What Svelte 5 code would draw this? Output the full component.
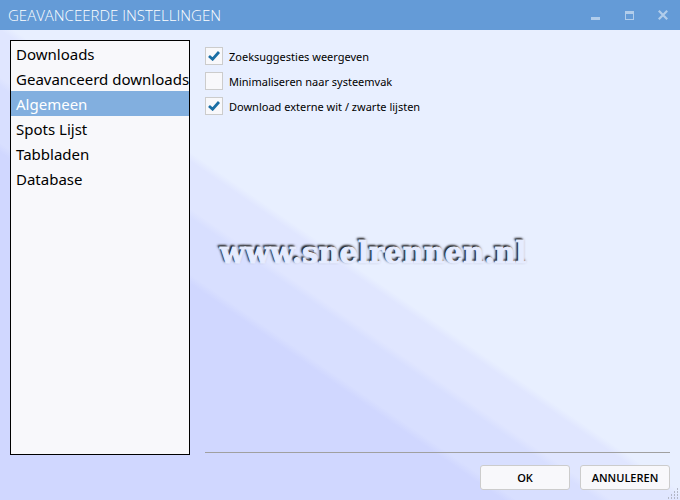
<script lang="ts">
	// Categories on the left hand side
	const categories: string[] = [
		'Downloads',
		'Geavanceerd downloads',
		'Algemeen',
		'Spots Lijst',
		'Tabbladen',
		'Database'
	];

	let selected = $state('Algemeen');

	let options = $state([
		{ label: 'Zoeksuggesties weergeven', checked: true },
		{ label: 'Minimaliseren naar systeemvak', checked: false },
		{ label: 'Download externe wit / zwarte lijsten', checked: true }
	]);

	// Dots of the resize grip, as [column, row]
	const grip = [
		[3, 0],
		[2, 1], [3, 1],
		[1, 2], [2, 2], [3, 2],
		[0, 3], [1, 3], [2, 3], [3, 3]
	];
</script>

<div class="window">
	<header class="titlebar">
		<h1>GEAVANCEERDE INSTELLINGEN</h1>
		<div class="window-buttons">
			<button type="button" aria-label="Minimaliseren">
				<svg width="10" height="10" viewBox="0 0 10 10" shape-rendering="crispEdges">
					<path d="M1 7h9v3H1z" fill="currentColor" />
				</svg>
			</button>
			<button type="button" aria-label="Maximaliseren">
				<svg width="10" height="10" viewBox="0 0 10 10" shape-rendering="crispEdges">
					<path d="M1 1h9v9H1zM2 4v5h7V4z" fill="currentColor" fill-rule="evenodd" />
				</svg>
			</button>
			<button type="button" aria-label="Sluiten">
				<svg width="10" height="10" viewBox="0 0 10 10">
					<path d="M0.8 0.8l8.4 8.4M9.2 0.8l-8.4 8.4" stroke="currentColor" stroke-width="2.2" />
				</svg>
			</button>
		</div>
	</header>

	<main class="client">
		<nav class="categories">
			{#each categories as category}
				<button type="button" class:active={category === selected} onclick={() => (selected = category)}>
					{category}
				</button>
			{/each}
		</nav>

		<section class="pane">
			<div class="options">
				{#each options as option}
					<label>
						<span class="box">
							<input type="checkbox" bind:checked={option.checked} />
							{#if option.checked}
								<svg width="12" height="10" viewBox="0 0 12 10">
									<path d="M1 5L4.6 8.2L11 1" fill="none" stroke="#1a6ea5" stroke-width="2.8" />
								</svg>
							{/if}
						</span>
						{option.label}
					</label>
				{/each}
			</div>

			<p class="watermark">www.snelrennen.nl</p>

			<footer>
				<button type="button">OK</button>
				<button type="button">ANNULEREN</button>
			</footer>
		</section>

		<svg class="grip" width="11" height="11" viewBox="0 0 11 11" shape-rendering="crispEdges">
			{#each grip as [col, row]}
				<rect x={col * 3} y={row * 3} width="1" height="2" fill="#b3b7c6" />
			{/each}
		</svg>
	</main>
</div>

<style>
	:global(body) {
		margin: 0;
	}

	.window {
		display: flex;
		flex-direction: column;
		min-height: 100vh;
		font-family: 'Noto Sans', 'Open Sans', sans-serif;
		color: #000;
	}

	button {
		margin: 0;
		padding: 0;
		border: 0;
		background: none;
		font-family: inherit;
		color: inherit;
	}

	.titlebar {
		display: flex;
		justify-content: space-between;
		height: 30px;
		padding-left: 8px;
		background: #649bd7;
		color: #fff;
	}

	h1 {
		margin: 0;
		font-family: 'Open Sans', 'Noto Sans', sans-serif;
		font-size: 15px;
		font-weight: 300;
		line-height: 31px;
	}

	.window-buttons {
		display: flex;
		color: #b1cdeb;
	}

	.window-buttons button {
		display: flex;
		align-items: center;
		justify-content: center;
		width: 34px;
	}

	.client {
		position: relative;
		flex: 1;
		display: grid;
		grid-template-columns: 180px 1fr;
		gap: 15px;
		padding: 10px;
		background: linear-gradient(
			to top right,
			#d0d7ff 37%,
			#d8dfff 38%,
			#d8dfff 44%,
			#e0e6ff 45%,
			#e0e6ff 50%,
			#e8efff 51%
		);
	}

	.categories {
		display: flex;
		flex-direction: column;
		margin-bottom: 35px;
		border: 1px solid #000;
		background: #f8f8fb;
		overflow: hidden;
	}

	.categories button {
		padding: 2px 0 0 5px;
		font-size: 15px;
		line-height: 23px;
		text-align: left;
		white-space: nowrap;
	}

	.categories .active {
		background: #82afdf;
		color: #fff;
	}

	.pane {
		display: flex;
		flex-direction: column;
	}

	.options {
		display: flex;
		flex-direction: column;
		gap: 5px;
		padding-top: 7px;
	}

	label {
		display: flex;
		align-items: flex-start;
		gap: 6px;
		font-size: 11px;
		line-height: 20px;
	}

	.box {
		display: grid;
		place-items: center;
		width: 18px;
		height: 18px;
	}

	.box > * {
		grid-area: 1 / 1;
	}

	.box svg {
		pointer-events: none;
	}

	input {
		appearance: none;
		box-sizing: border-box;
		width: 18px;
		height: 18px;
		margin: 0;
		border: 1px solid #ccc;
		background: #f8f8fb;
	}

	.watermark {
		margin: 116px 0 0 15px;
		font-family: 'DejaVu Serif', serif;
		font-size: 29px;
		font-weight: 700;
		line-height: 40px;
		color: #e6ecff;
		-webkit-text-stroke: 1px #e6ecff;
		text-shadow:
			-1px -1px 1px #222,
			-2px -2px 2px #333,
			-1px -1px 3px #556;
	}

	footer {
		display: flex;
		justify-content: flex-end;
		gap: 10px;
		margin-top: auto;
		padding-top: 12px;
		border-top: 1px solid #a0a0a0;
	}

	footer button {
		box-sizing: border-box;
		width: 90px;
		height: 25px;
		border: 1px solid #ccc;
		border-radius: 3px;
		background: #f8f8fb;
		font-family: 'Open Sans', 'Noto Sans', sans-serif;
		font-size: 11px;
		font-weight: 600;
	}

	.grip {
		position: absolute;
		right: 1px;
		bottom: 1px;
	}
</style>
